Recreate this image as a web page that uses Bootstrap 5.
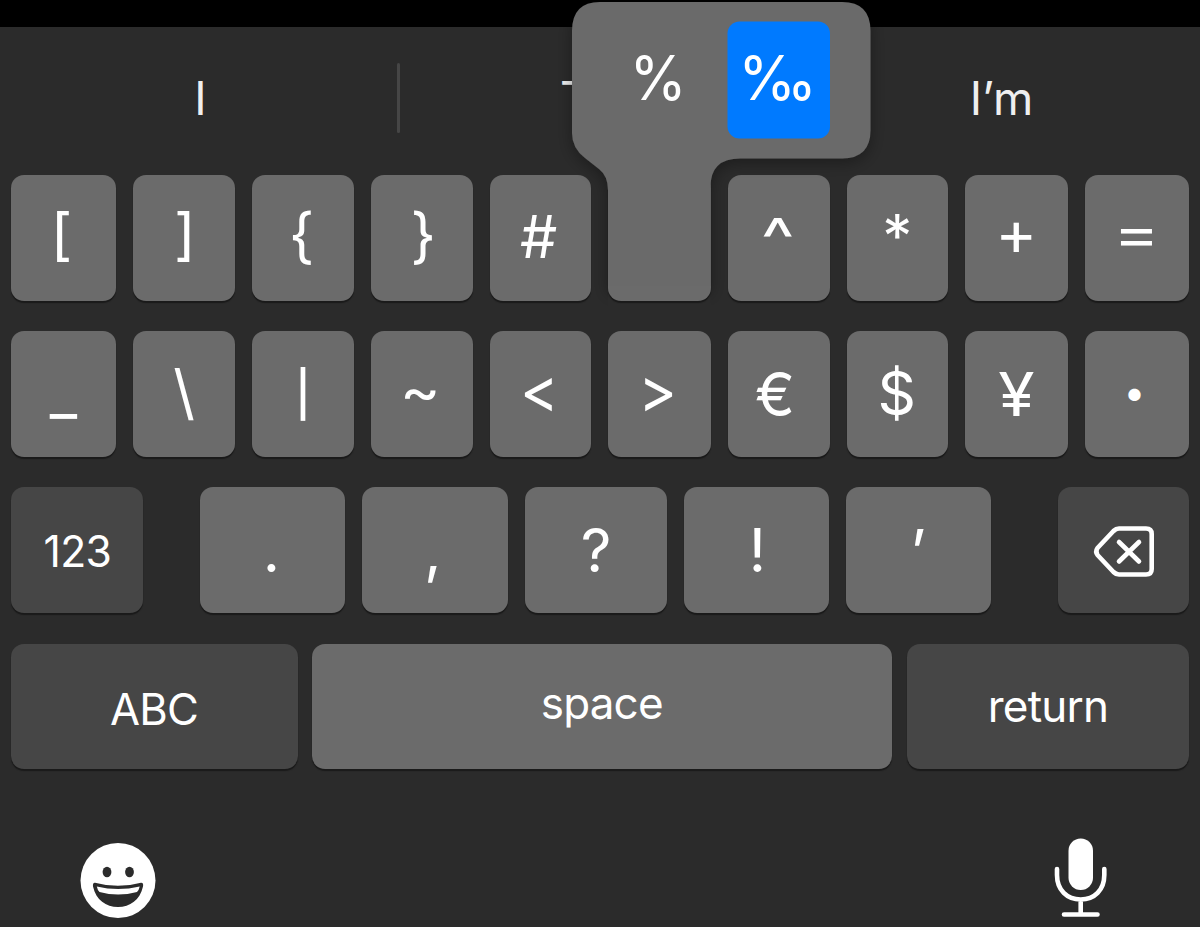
<!DOCTYPE html>
<html lang="en">
<head>
<meta charset="utf-8">
<meta name="viewport" content="width=device-width, initial-scale=1">
<title>Keyboard</title>
<link href="https://cdn.jsdelivr.net/npm/bootstrap@5.3.0/dist/css/bootstrap.min.css" rel="stylesheet">
<style>
body{background:#2b2b2b;font-family:Inter,"Liberation Sans",sans-serif;color:#fff;width:1200px;height:927px}
.topbar{height:27px;background:#000}
.suggest{height:148px;padding-bottom:5px;display:grid;grid-template-columns:401px 398px 401px;font-size:46px;color:#efefef}
.suggest .current{padding-left:159px}
.divider{width:3px;height:70px;background:#464646;border-radius:2px;margin:-2px 1px 0 -4px}
.keyrow{height:125.5px;margin:0 11px 30.7px}
.r10{display:grid;grid-template-columns:122px 119px 119px 118.5px 118.5px 119.5px 119px 118.5px 120px 104px}
.r10 .key:not(:last-child){margin-right:17px}
.r5{display:grid;grid-template-columns:145px 146px 142px 145px 145px;column-gap:17px;margin-left:57.5px}
.r3{display:grid;grid-template-columns:286.5px 580px 282px;justify-content:space-between}
.key{background:#6b6b6b;color:#fff;border:0;border-radius:13px;padding:0;font-size:60px;line-height:1;box-shadow:0 2px 1px #1a1a1a;display:flex;align-items:center;justify-content:center}
.key-dark{background:#464646}
.key-word{font-size:44px;letter-spacing:-.8px}
.key-side{width:131.5px}
.key span{display:block;transform:translate(var(--dx,0),var(--dy,0)) scale(var(--sx,1),var(--sy,1))}
.g-bracket{--dx:-2px;--dy:-4px;--sy:.93}
.g-bracket-r{--dx:1px;--dy:-4px;--sy:.93}
.g-brace{--dx:-1.5px;--dy:-3.5px}
.g-brace-r{--dx:1.5px;--dy:-3.5px}
.g-hash{--dx:-1.5px;--dy:-1.5px;--sx:.98;--sy:.98}
.g-caret{--dx:-.5px;--dy:-.5px;--sx:1.2}
.g-star{--dy:-2px}
.g-plus{--dx:-.5px;--dy:-5.5px;--sx:1.06;--sy:1.03}
.g-equal{--dx:-.5px;--dy:-5px;--sx:1.17;--sy:.93}
.g-under{--dy:-2px}
.g-back{--dy:-2px}
.g-pipe{--dy:-1px;--sy:.75}
.g-tilde{--dx:-1.5px;--dy:-4.5px;--sx:1.02}
.g-less{--dx:-.5px;--dy:-5px;--sx:.97;--sy:1.05}
.g-more{--dx:-1px;--dy:-5px;--sx:.97;--sy:1.05}
.g-euro{--dx:-3.5px}
.g-dollar{--dx:-.5px;--dy:-1px}
.g-yen{--dx:0px;--sx:1.1}
.g-bullet{--dx:-2.5px;--dy:-2.5px;--sx:.65;--sy:.65}
.g-dot{--dx:-1px}
.g-comma{--dx:-2px}
.g-bang{--dx:1px;--dy:0px}
.g-apos{--dx:-.5px;--dy:.5px}
.g-num{--dx:.5px;--dy:1px;--sx:.97}
.g-abc{--dx:-.5px;--dy:2.5px;--sx:.99}
.g-space{--dx:-.5px;--dy:-3.5px}
.icons{margin:67px 89px 0 79px}
.popup{left:540px;top:0;width:360px;height:320px;z-index:3}
.popup text{font-family:Inter,"Liberation Sans",sans-serif;fill:#fff;font-size:62px;text-anchor:middle}
</style>
</head>
<body class="position-relative overflow-hidden">
<div class="topbar"></div>
<div class="suggest align-items-center">
  <div class="d-flex align-items-center"><span class="flex-grow-1 text-center">I</span><span class="divider"></span></div>
  <span class="current">T</span>
  <span class="text-center ps-1">I’m</span>
</div>
<div class="keyrow r10">
  <button class="key"><span class="g-bracket">[</span></button>
  <button class="key"><span class="g-bracket-r">]</span></button>
  <button class="key"><span class="g-brace">{</span></button>
  <button class="key"><span class="g-brace-r">}</span></button>
  <button class="key"><span class="g-hash">#</span></button>
  <button class="key" aria-label="percent"></button>
  <button class="key"><span class="g-caret">^</span></button>
  <button class="key"><span class="g-star">*</span></button>
  <button class="key"><span class="g-plus">+</span></button>
  <button class="key"><span class="g-equal">=</span></button>
</div>
<div class="keyrow r10">
  <button class="key"><span class="g-under">_</span></button>
  <button class="key"><span class="g-back">\</span></button>
  <button class="key"><span class="g-pipe">|</span></button>
  <button class="key"><span class="g-tilde">~</span></button>
  <button class="key"><span class="g-less">&lt;</span></button>
  <button class="key"><span class="g-more">&gt;</span></button>
  <button class="key"><span class="g-euro">€</span></button>
  <button class="key"><span class="g-dollar">$</span></button>
  <button class="key"><span class="g-yen">¥</span></button>
  <button class="key"><span class="g-bullet">•</span></button>
</div>
<div class="d-flex keyrow">
  <button class="key key-dark key-word key-side"><span class="g-num">123</span></button>
  <div class="r5">
    <button class="key"><span class="g-dot">.</span></button>
    <button class="key"><span class="g-comma">,</span></button>
    <button class="key"><span>?</span></button>
    <button class="key"><span class="g-bang">!</span></button>
    <button class="key"><span class="g-apos">’</span></button>
  </div>
  <button class="key key-dark key-side ms-auto pt-1" aria-label="delete">
    <svg width="64" height="54" viewBox="1091 525 64 54" fill="none" stroke="#fff" stroke-width="4.6" stroke-linecap="round" stroke-linejoin="round"><path d="M1119 528.5H1146Q1151.7 528.5 1151.7 534V569Q1151.7 574.5 1146 574.5H1119Q1116 574.5 1113.5 572L1097.5 555Q1095 551.5 1097.5 548L1113.5 531Q1116 528.5 1119 528.5ZM1119 542l20 19.5M1139 542l-20 19.5"/></svg>
  </button>
</div>
<div class="keyrow r3">
  <button class="key key-dark key-word"><span class="g-abc">ABC</span></button>
  <button class="key key-word"><span class="g-space">space</span></button>
  <button class="key key-dark key-word"><span>return</span></button>
</div>
<div class="icons d-flex justify-content-between align-items-start">
  <svg width="78" height="84" viewBox="79 836 78 84"><circle cx="118" cy="880.5" r="37.5" fill="#fff"/><g fill="#2b2b2b"><ellipse cx="107" cy="872" rx="4.4" ry="5.2"/><ellipse cx="129.5" cy="872" rx="4.4" ry="5.2"/><path d="M95 882.7Q118 889 141 882.7Q143.8 882.5 143 886.5C140 900 130 907 118 907S96 900 93 886.5Q92.5 882.5 95 882.7Z"/></g><path d="M96.8 886.5Q118 891.5 139.7 886.5Q139 890 137 892Q118 897 99.5 892Q97.5 890 96.8 886.5Z" fill="#fff"/></svg>
  <svg width="60" height="84" viewBox="1051 836 60 84"><rect x="1068.5" y="838.5" width="24.5" height="51.5" rx="12.2" fill="#fff"/><path d="M1057 869V875C1057 890 1067 899.5 1080.7 899.5S1104.3 890 1104.3 875V869M1080.7 899.5V914M1064 914.5H1097.5" fill="none" stroke="#fff" stroke-width="4.6" stroke-linecap="round"/></svg>
</div>
<svg class="popup position-absolute" viewBox="540 0 360 320">
  <defs><filter id="sh" x="-20%" y="-20%" width="140%" height="140%"><feDropShadow dx="0" dy="4" stdDeviation="8" flood-color="#000" flood-opacity=".35"/></filter>
  <clipPath id="above"><path d="M540 0H900V320H710.5V286H608V320H540Z"/></clipPath></defs>
  <g clip-path="url(#above)"><path fill="#6b6b6b" filter="url(#sh)" d="M600 2H842Q870.5 2 870.5 31V130Q870.5 158.5 842 158.5H740Q710.5 158.5 710.5 187V290H608V190Q608 176 599 169L585 158Q572 148 572 133V31Q572 2 600 2Z"/></g>
  <rect x="727.5" y="21.5" width="102.5" height="117" rx="12" fill="#007aff"/>
  <text transform="translate(658 99.5) scale(.94 1)">%</text><text transform="translate(777.5 99.5) scale(.95 1)">‰</text>
</svg>
<script src="https://cdn.jsdelivr.net/npm/bootstrap@5.3.0/dist/js/bootstrap.bundle.min.js"></script>
</body>
</html>
